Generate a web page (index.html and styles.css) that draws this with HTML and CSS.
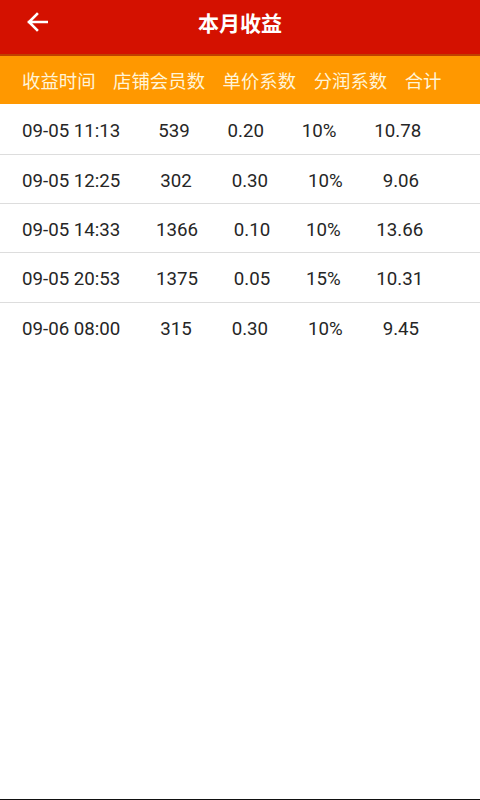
FILE: index.html
```html
<!DOCTYPE html>
<html lang="zh-CN">

<head>
    <meta charset="UTF-8">
    <meta name="viewport" content="width=device-width, initial-scale=1.0">
    <title>本月收益</title>
    <link rel="stylesheet" href="styles.css">
</head>

<body>
    <div class="page">
        <div class="topbar">
            <span class="back">
                <svg width="22" height="20" viewBox="0 0 22 20">
                    <path d="M21 10H3M11 2L3 10l8 8" fill="none" stroke="#ffffff" stroke-width="2.6" stroke-linecap="square"/>
                </svg>
            </span>
            <h1 class="title">本月收益</h1>
        </div>
        <div class="head-row">
            <span class="cell">收益时间</span>
            <span class="cell">店铺会员数</span>
            <span class="cell">单价系数</span>
            <span class="cell">分润系数</span>
            <span class="cell">合计</span>
        </div>
        <ul class="list">
            <li class="row">
                <span class="cell">09-05 11:13</span>
                <span class="cell">539</span>
                <span class="cell">0.20</span>
                <span class="cell">10%</span>
                <span class="cell">10.78</span>
            </li>
            <li class="row">
                <span class="cell">09-05 12:25</span>
                <span class="cell">302</span>
                <span class="cell">0.30</span>
                <span class="cell">10%</span>
                <span class="cell">9.06</span>
            </li>
            <li class="row">
                <span class="cell">09-05 14:33</span>
                <span class="cell">1366</span>
                <span class="cell">0.10</span>
                <span class="cell">10%</span>
                <span class="cell">13.66</span>
            </li>
            <li class="row">
                <span class="cell">09-05 20:53</span>
                <span class="cell">1375</span>
                <span class="cell">0.05</span>
                <span class="cell">15%</span>
                <span class="cell">10.31</span>
            </li>
            <li class="row">
                <span class="cell">09-06 08:00</span>
                <span class="cell">315</span>
                <span class="cell">0.30</span>
                <span class="cell">10%</span>
                <span class="cell">9.45</span>
            </li>
        </ul>
    </div>
</body>

</html>
```

FILE: styles.css
```css
/* Page */
body {
    margin: 0;
    background: #ffffff;
    font-family: Roboto, "Noto Sans CJK SC", sans-serif;
}

.page {
    height: 799px;
    border-bottom: 1px solid #111111;
    background: #ffffff;
}

/* Red title bar */
.topbar {
    height: 44px;
    padding-bottom: 10px;
    background-color: #d41100;
    border-bottom: 2px solid #c04000;
    display: flex;
    align-items: center;
    justify-content: center;
    position: relative;
}

.back {
    position: absolute; /* sits over the bar, left side */
    left: 26px;
    top: 12px;
    display: flex;
}

.title {
    margin: 0;
    color: #ffffff;
    font-size: 21px;
    font-weight: bold;
    font-family: "Noto Sans CJK SC", sans-serif;
}

/* Orange column header */
.head-row {
    display: flex;
    align-items: center;
    height: 48px;
    padding: 0 21px 0 22px;
    background-color: #ff9800;
    color: #fff4d8;
    font-size: 18.4px;
    font-family: "Noto Sans CJK SC", sans-serif;
}

.cell {
    flex: 1 1 auto; /* like wrap_content + weight 1 */
    white-space: nowrap;
}

/* Data rows */
.list {
    list-style: none;
    margin: 0;
    padding: 0;
}

.row {
    box-sizing: border-box;
    display: flex;
    align-items: center;
    height: 49px;
    padding: 3px 21px 0 22px;
    color: #262626;
    font-size: 18.7px;
    border-top: 1px solid #dddddd;
}

.row:first-child {
    border-top: none;
    height: 50px;
}

.row:nth-child(4) {
    height: 50px;
}
```
